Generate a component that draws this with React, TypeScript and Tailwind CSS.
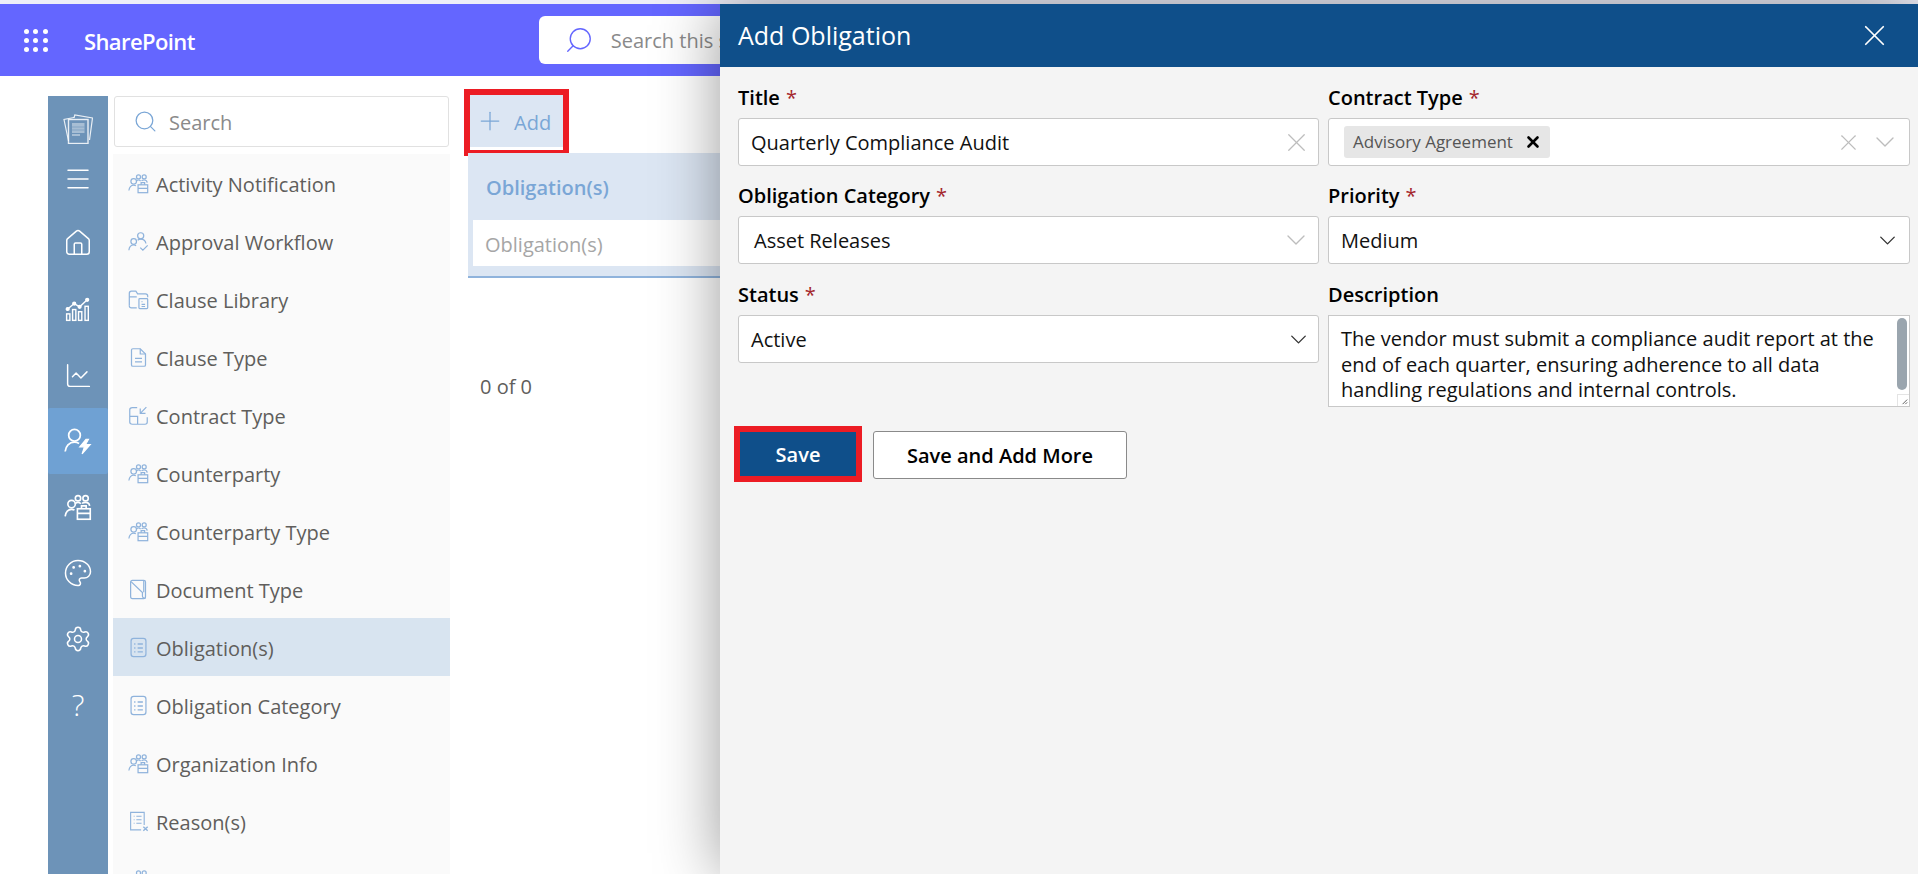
import { ChartLine, ChevronDown, House, Menu, Palette, Plus, Search, Settings, X } from 'lucide-react';
import type { ReactNode } from 'react';

const FONTE = { fontFamily: '"Open Sans", "Noto Sans", sans-serif' };

function IconeEquipe({ className }: { className?: string }) {
  return (
    <svg viewBox="0 0 24 24" fill="none" stroke="currentColor" strokeWidth="1.4" className={className}>
      <circle cx="6.500" cy="9.500" r="3.200" />
      <path d="M1 20c.5-3.500 2.500-6 5.500-6 1 0 1.800.2 2.500.6" />
      <circle cx="12" cy="4.500" r="2.300" />
      <circle cx="18.500" cy="4.500" r="2.300" />
      <path d="M9.500 9.500c.6-1 1.500-1.500 2.500-1.500s1.800.4 2.400 1.200M15.500 9c.6-.7 1.700-1 3-1 1.800 0 3.200 1.200 3.500 3" />
      <rect x="11.500" y="13.500" width="11" height="9" />
      <path d="M15 13.500v-2.500h4v2.500M11.500 17.500h11" />
    </svg>
  );
}

function IconeAprovacao({ className }: { className?: string }) {
  return (
    <svg viewBox="0 0 24 24" fill="none" stroke="currentColor" strokeWidth="1.4" className={className}>
      <circle cx="14.500" cy="5.500" r="3.500" />
      <circle cx="6.500" cy="12" r="3.200" />
      <path d="M1 22c.3-3.500 2.500-6 5.500-6 1 0 2 .3 2.800.9M11 10.500c.8-.7 2-1.200 3.500-1.200 3 0 5.500 2 6 5M14 19l3 3 5.500-5.500" />
    </svg>
  );
}

function IconeBiblioteca({ className }: { className?: string }) {
  return (
    <svg viewBox="0 0 24 24" fill="none" stroke="currentColor" strokeWidth="1.400" className={className}>
      <path d="M1.500 19V5c0-1.200.8-2.500 2.500-2.500h5l2 3h9c1.200 0 2.500 1 2.500 2.500v1.500M1.500 9h8.500" />
      <path d="M1.500 19c0 1.800 1 2.500 2.500 2.500h6" />
      <rect x="12.500" y="11" width="10" height="11.500" rx="1" />
      <path d="M15.500 14.500h1M15.500 17.500h4M15.500 20h4" />
    </svg>
  );
}

function IconeDocumento({ className }: { className?: string }) {
  return (
    <svg viewBox="0 0 24 24" fill="none" stroke="currentColor" strokeWidth="1.400" className={className}>
      <path d="M5.500 2h8.500l6 6v12.500c0 1-.8 1.500-1.500 1.500H5.500c-.8 0-1.500-.6-1.500-1.500V3.500C4 2.600 4.700 2 5.500 2z" />
      <path d="M14 2v6h6M8 13h8M8 17h8" />
    </svg>
  );
}

function IconeContrato({ className }: { className?: string }) {
  return (
    <svg viewBox="0 0 24 24" fill="none" stroke="currentColor" strokeWidth="1.400" className={className}>
      <path d="M10.500 3H5C3 3 2 4 2 5.500v14C2 21 3 22 5 22h14.500c1.500 0 2.500-1 2.500-2.500V14M2 13h9v9" />
      <path d="M21 2.500l-7 7M14 4v5.500h6" />
    </svg>
  );
}

function IconeTipoDoc({ className }: { className?: string }) {
  return (
    <svg viewBox="0 0 24 24" fill="none" stroke="currentColor" strokeWidth="1.400" className={className}>
      <path d="M3 3.500C3 2.500 3.800 1.500 5 1.500h13c1.200 0 2 1 2 2V20c0 1.500-.8 2.500-2 2.500H5c-1.200 0-2-1-2-2.500V3.500z" />
      <path d="M3.500 3l13 12.500v4c0 1.500 1.500 3 3.500 2.500M18 2v13" />
    </svg>
  );
}

function IconeLista({ className }: { className?: string }) {
  return (
    <svg viewBox="0 0 24 24" fill="none" stroke="currentColor" strokeWidth="1.400" className={className}>
      <rect x="3.500" y="1.500" width="17" height="21" rx="3" />
      <path d="M7 8h1.500M7 12.500h1.500M7 17h1.500M11 8h6M11 12.500h6M11 17h6" strokeWidth="1.700" />
    </svg>
  );
}

function IconeMotivo({ className }: { className?: string }) {
  return (
    <svg viewBox="0 0 24 24" fill="none" stroke="currentColor" strokeWidth="1.300" className={className}>
      <path d="M18.500 16V1.500H3v20h12" />
      <path d="M6.500 6h1M6.500 10h1M6.500 14h1M9.500 6h6M9.500 10h6M9.500 14h6" />
      <path d="M17.500 18l5 4.500M22.500 18l-5 4.500" strokeWidth="1.600" />
    </svg>
  );
}

function IconeGrafico({ className }: { className?: string }) {
  return (
    <svg viewBox="0 0 24 24" fill="none" stroke="currentColor" strokeWidth="1.300" className={className}>
      <path d="M2.500 12l6-5 5 3 7-6.500" />
      <circle cx="2.500" cy="12" r="1.300" fill="currentColor" />
      <circle cx="8.500" cy="7" r="1.300" fill="currentColor" />
      <circle cx="13.500" cy="10" r="1.300" fill="currentColor" />
      <circle cx="20.500" cy="3.500" r="1.300" fill="currentColor" />
      <rect x="1.500" y="16.500" width="3" height="6" />
      <rect x="7" y="12.500" width="3" height="10" />
      <rect x="12.500" y="14.500" width="3" height="8" />
      <rect x="18.500" y="9.500" width="3" height="13" />
    </svg>
  );
}

function IconeUsuarioRaio({ className }: { className?: string }) {
  return (
    <svg viewBox="0 0 24 24" fill="none" stroke="currentColor" strokeWidth="1.500" className={className}>
      <circle cx="9" cy="7" r="5" />
      <path d="M1 21c.4-4.500 3.400-8 8-8 1.500 0 2.800.4 3.900 1.200" />
      <path d="M19 10.500l-5.500 6.500h4l-2 6 7-8h-4l2.500-4.500z" fill="currentColor" strokeWidth="1" />
    </svg>
  );
}

function IconeLogo({ className }: { className?: string }) {
  return (
    <svg viewBox="0 0 30 30" fill="none" stroke="currentColor" strokeWidth="1.200" strokeOpacity="0.85" className={className}>
      <path d="M5.500 27L1 5.500 11 3.500" />
      <path d="M11 4l.8-3 17.700 3-3 22" />
      <rect x="5.500" y="5.500" width="19.500" height="24" strokeWidth="1.400" />
      <rect x="9" y="9" width="12.500" height="10" fill="currentColor" fillOpacity="0.4" stroke="none" />
      <path d="M9 13h12.500M9 16h12.500" stroke="#6d93b8" strokeWidth="0.600" strokeOpacity="1" />
      <path d="M9 21h8" strokeWidth="1.600" strokeOpacity="0.5" />
    </svg>
  );
}

const ITENS_LATERAL = [
  { icone: <House className="size-[30px]" strokeWidth={1.2} /> },
  { icone: <IconeGrafico className="size-[26px]" /> },
  { icone: <ChartLine className="size-[29px]" strokeWidth={1.2} /> },
  { icone: <IconeUsuarioRaio className="size-[28px]" />, ativo: true },
  { icone: <IconeEquipe className="size-[28px]" /> },
  { icone: <Palette className="size-[30px]" strokeWidth={1.2} /> },
  { icone: <Settings className="size-[28px]" strokeWidth={1.3} /> },
  { icone: <span className="text-[30px] font-light leading-none">?</span> },
];

const ITENS_MENU: { nome: string; icone: ReactNode; ativo?: boolean }[] = [
  { nome: 'Activity Notification', icone: <IconeEquipe className="size-[21px]" /> },
  { nome: 'Approval Workflow', icone: <IconeAprovacao className="size-[21px]" /> },
  { nome: 'Clause Library', icone: <IconeBiblioteca className="size-[21px]" /> },
  { nome: 'Clause Type', icone: <IconeDocumento className="size-[21px]" /> },
  { nome: 'Contract Type', icone: <IconeContrato className="size-[21px]" /> },
  { nome: 'Counterparty', icone: <IconeEquipe className="size-[21px]" /> },
  { nome: 'Counterparty Type', icone: <IconeEquipe className="size-[21px]" /> },
  { nome: 'Document Type', icone: <IconeTipoDoc className="size-[21px]" /> },
  { nome: 'Obligation(s)', icone: <IconeLista className="size-[21px]" />, ativo: true },
  { nome: 'Obligation Category', icone: <IconeLista className="size-[21px]" /> },
  { nome: 'Organization Info', icone: <IconeEquipe className="size-[21px]" /> },
  { nome: 'Reason(s)', icone: <IconeMotivo className="size-[21px]" /> },
  { nome: 'Request Action', icone: <IconeEquipe className="size-[21px]" /> },
];

function Rotulo({ texto, obrigatorio }: { texto: string; obrigatorio?: boolean }) {
  return (
    <label className="mb-[3px] block h-[34px] text-[20px] font-semibold leading-[34px] text-black">
      {texto}
      {obrigatorio ? <span className="ml-[6px] font-normal text-[#a4262c]">*</span> : null}
    </label>
  );
}

function Caixa({ children }: { children: ReactNode }) {
  return (
    <div className="flex h-[48px] items-center rounded-[3px] border border-[#c8c8c8] bg-white text-[20px] text-[#111]">
      {children}
    </div>
  );
}

export default function App() {
  return (
    <div className="relative h-[874px] w-[1918px] overflow-hidden bg-white" style={FONTE}>
      <div className="h-[4px] bg-[#eeeef8]" />

      <header className="flex h-[72px] items-center bg-[#6466ff]">
        <div className="ml-[24px] grid w-[24px] grid-cols-3 gap-[4px]">
          {Array.from({ length: 9 }).map((_, i) => (
            <span key={i} className="size-[5px] rounded-full bg-white" />
          ))}
        </div>
        <span className="ml-[36px] pt-[3px] text-[22px] font-semibold tracking-[-0.6px] text-white">SharePoint</span>
        <div className="ml-[344px] flex h-[48px] w-[300px] items-center rounded-[6px] bg-white">
          <Search className="ml-[25px] size-[30px] -scale-x-100 text-[#6466ff]" strokeWidth={1.1} />
          <span className="ml-[17px] pt-[2px] text-[20px] text-[#8a8a8a]">Search this site</span>
        </div>
      </header>

      <div className="ml-[48px] mt-[20px] flex items-start">
        <nav className="h-[778px] w-[60px] bg-[#6d93b8] text-white">
          <div className="flex h-[114px] flex-col items-center">
            <IconeLogo className="mt-[18px] size-[30px]" />
            <Menu className="mt-[20px] size-[30px]" strokeWidth={1.2} />
          </div>
          {ITENS_LATERAL.map((item, i) => (
            <div key={i} className={`flex h-[66px] items-center justify-center rounded-[2px] ${item.ativo ? 'bg-[#6fa1d3]' : ''}`}>
              {item.icone}
            </div>
          ))}
        </nav>

        <aside className="ml-[5px] w-[337px]">
          <div className="mx-[1px] flex h-[51px] items-center rounded-[3px] border border-[#e1e1e1] bg-white">
            <Search className="ml-[18px] size-[25px] text-[#7aa6d6]" strokeWidth={1.2} />
            <span className="ml-[11px] pt-[3px] text-[20px] text-[#8a8a8a]">Search</span>
          </div>
          <ul className="mt-[7px] bg-[#fafafa]">
            {ITENS_MENU.map((item) => (
              <li key={item.nome} className={`flex h-[58px] items-center pl-[14px] ${item.ativo ? 'bg-[#d8e4f0]' : ''}`}>
                <span className="flex w-[22px] justify-center text-[#8fb3dc]">{item.icone}</span>
                <span className="ml-[7px] pt-[4px] text-[20px] text-[#605e5c]">{item.nome}</span>
              </li>
            ))}
          </ul>
        </aside>

        <main className="ml-[14px] w-[300px]">
          <button className="-mt-[7px] flex h-[67px] w-[105px] items-center border-[6px] border-[#ec1c24] bg-white">
            <span className="flex h-[52px] w-full items-center self-start bg-[#dce6f3] text-[#7aa6d6]">
              <Plus className="ml-[5px] size-[30px]" strokeWidth={1} />
              <span className="ml-[9px] pt-[4px] text-[20px]">Add</span>
            </span>
          </button>
          <div className="ml-[4px] mt-[-3px] h-[125px] border-b-2 border-[#8fb3dc] bg-[#dce6f3] pl-[5px]">
            <div className="flex h-[67px] items-center pl-[13px] pt-[3px] text-[20px] font-semibold text-[#7aa6d6]">Obligation(s)</div>
            <div className="flex h-[46px] items-center bg-white pl-[12px] pt-[3px] text-[20px] text-[#a6a6a6]">Obligation(s)</div>
          </div>
          <div className="ml-[16px] mt-[94px] text-[20px] text-[#605e5c]">0 of 0</div>
        </main>
      </div>

      {/* painel lateral por cima da página */}
      <section className="absolute bottom-0 left-[720px] right-0 top-[4px] bg-[#f4f4f4] shadow-[0_0_60px_rgba(0,0,0,0.4)]">
        <div className="flex h-[63px] items-center justify-between bg-[#0f4f8a] pl-[18px] pr-[26px] text-white">
          <span className="text-[25px]">Add Obligation</span>
          <X className="size-[35px]" strokeWidth={1.2} />
        </div>

        <div className="ml-[18px] mr-[8px] mt-[14px] grid grid-cols-[581px_582px] gap-x-[9px]">
          <div>
            <Rotulo texto="Title" obrigatorio />
            <Caixa>
              <span className="ml-[12px] flex-1 pt-[2px]">Quarterly Compliance Audit</span>
              <X className="mr-[6px] size-[31px] text-[#bdbdbd]" strokeWidth={1} />
            </Caixa>
          </div>
          <div>
            <Rotulo texto="Contract Type" obrigatorio />
            <Caixa>
              <span className="ml-[15px] flex h-[32px] w-[206px] items-center rounded-[3px] bg-[#e6e6e6] pl-[9px] text-[17px] text-[#555]">
                Advisory Agreement
                <X className="ml-[11px] size-[18px] text-black" strokeWidth={3.5} />
              </span>
              <X className="ml-auto size-[27px] text-[#bdbdbd]" strokeWidth={1} />
              <ChevronDown className="ml-[7px] mr-[8px] size-[32px] text-[#bdbdbd]" strokeWidth={1} />
            </Caixa>
          </div>

          <div className="mt-[13px]">
            <Rotulo texto="Obligation Category" obrigatorio />
            <Caixa>
              <span className="ml-[15px] flex-1 pt-[2px]">Asset Releases</span>
              <ChevronDown className="mr-[6px] size-[32px] text-[#bdbdbd]" strokeWidth={1} />
            </Caixa>
          </div>
          <div className="mt-[13px]">
            <Rotulo texto="Priority" obrigatorio />
            <Caixa>
              <span className="ml-[12px] flex-1 pt-[2px]">Medium</span>
              <ChevronDown className="mr-[8px] size-[27px] text-[#333]" strokeWidth={1.2} />
            </Caixa>
          </div>

          <div className="mt-[14px]">
            <Rotulo texto="Status" obrigatorio />
            <Caixa>
              <span className="ml-[12px] flex-1 pt-[2px]">Active</span>
              <ChevronDown className="mr-[6px] size-[27px] text-[#333]" strokeWidth={1.2} />
            </Caixa>
          </div>
          <div className="mt-[14px]">
            <Rotulo texto="Description" />
            <div className="relative h-[92px] overflow-hidden border border-[#c8c8c8] bg-white pb-[10px] pl-[12px] pr-[20px] pt-[10px] text-[20px] leading-[25.5px] text-[#111]">
              The vendor must submit a compliance audit report at the end of each quarter, ensuring adherence to all data handling regulations and internal controls.
              <span className="absolute right-[2px] top-[2px] h-[72px] w-[10px] rounded-full bg-[#9aa5ae]" />
              <span className="absolute bottom-0 right-0 size-[12px] border-l border-t border-[#e4e4e4] bg-white">
                <svg viewBox="0 0 12 12" className="size-full" stroke="#555" strokeWidth="1">
                  <path d="M5 10l5-5M8 10l2-2" />
                </svg>
              </span>
            </div>
          </div>
        </div>

        <div className="ml-[14px] mt-[19px] flex items-center">
          <button className="flex h-[56px] w-[128px] items-center justify-center border-[6px] border-[#ec1c24] bg-[#0f4f8a] pt-[2px] text-[20px] font-semibold text-white">
            Save
          </button>
          <button className="ml-[11px] mt-[1px] h-[48px] w-[254px] rounded-[3px] border border-[#8a8a8a] bg-white pt-[2px] text-[20px] font-semibold text-black">
            Save and Add More
          </button>
        </div>
      </section>
    </div>
  );
}
